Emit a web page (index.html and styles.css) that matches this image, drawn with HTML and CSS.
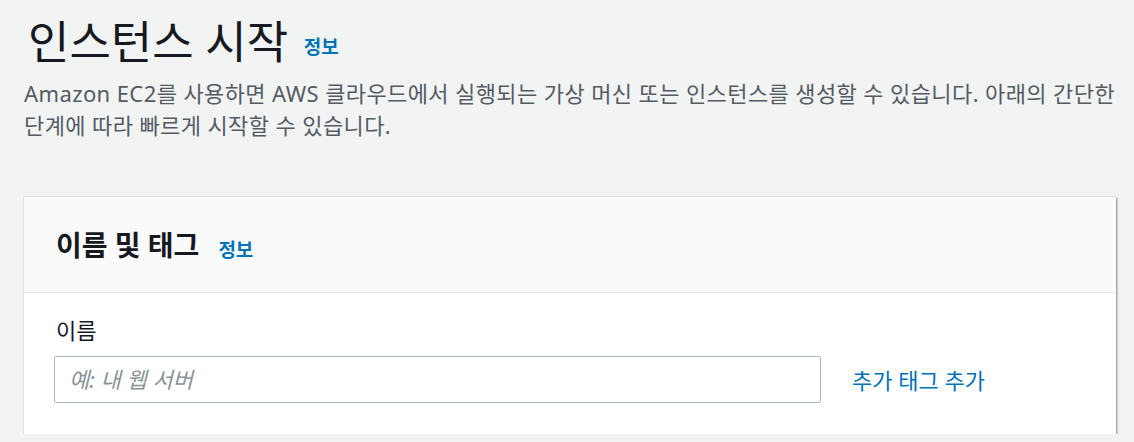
FILE: index.html
```html
<!DOCTYPE html>
<html lang="ko">
<head>
    <meta charset="UTF-8">
    <meta name="viewport" content="width=device-width, initial-scale=1.0">
    <title>인스턴스 시작</title>
    <link rel="stylesheet" href="styles.css">
</head>
<body>
    <div class="page">
        <div class="page-header">
            <h1>인스턴스 시작 <a href="#" class="info-link">정보</a></h1>
            <p class="page-desc">Amazon EC2를 사용하면 AWS 클라우드에서 실행되는 가상 머신 또는 인스턴스를 생성할 수 있습니다. 아래의 간단한 단계에 따라 빠르게 시작할 수 있습니다.</p>
        </div>

        <div class="card">
            <div class="card-header">
                <h2>이름 및 태그<a href="#" class="info-link section-info">정보</a></h2>
            </div>
            <div class="card-body">
                <label for="name" class="field-label">이름</label>
                <div class="field-row">
                    <input type="text" id="name" class="text-input" placeholder="예: 내 웹 서버">
                    <a href="#" class="add-tags">추가 태그 추가</a>
                </div>
            </div>
        </div>
    </div>
</body>
</html>
```

FILE: styles.css
```css
body {
    margin: 0;
    background-color: #f2f3f3;
    font-family: "Noto Sans", "Noto Sans CJK KR", sans-serif;
    color: #16191f;
}

.page {
    padding: 0 18px 0 24px;
}

.page-header {
    padding-top: 13px;
}

h1 {
    margin: 0 0 0 4px;
    font-size: 45px;
    font-weight: 400;
    line-height: 58px;
}

.info-link {
    color: #0073bb;
    font-size: 19px;
    font-weight: 700;
    text-decoration: none;
    margin-left: 4px;
    vertical-align: middle;
}

.section-info {
    margin-left: 19px;
}

.page-desc {
    margin: 1px -18px 0 0;
    font-size: 22px;
    line-height: 32px;
    letter-spacing: 0.4px;
    word-break: keep-all;
    color: #545b64;
}

.card {
    margin-top: 56px;
    background-color: #ffffff;
    box-shadow: 1px 1px 2px rgba(0, 28, 36, 0.45), 0 0 1px rgba(0, 28, 36, 0.25);
}

.card-header {
    background-color: #fafafa;
    border-bottom: 1px solid #eaeded;
    height: 95px;
    padding: 0 32px;
    display: flex;
    align-items: center;
}

h2 {
    margin: 0;
    font-size: 28px;
    font-weight: 700;
}

.card-body {
    padding: 22px 32px 31px 30px;
}

.field-label {
    display: block;
    font-size: 22px;
    line-height: 30px;
    color: #16191f;
    margin-bottom: 11px;
    padding-left: 2px;
}

.field-row {
    display: flex;
    align-items: center;
}

.text-input {
    width: 767px;
    height: 47px;
    box-sizing: border-box;
    border: 1px solid #aab7b8;
    border-radius: 2px;
    padding: 0 14px;
    font-family: inherit;
    font-size: 22px;
}

.text-input::placeholder {
    color: #879596;
    font-style: italic;
}

.add-tags {
    margin-left: 31px;
    color: #0073bb;
    font-size: 22px;
    text-decoration: none;
}
```
